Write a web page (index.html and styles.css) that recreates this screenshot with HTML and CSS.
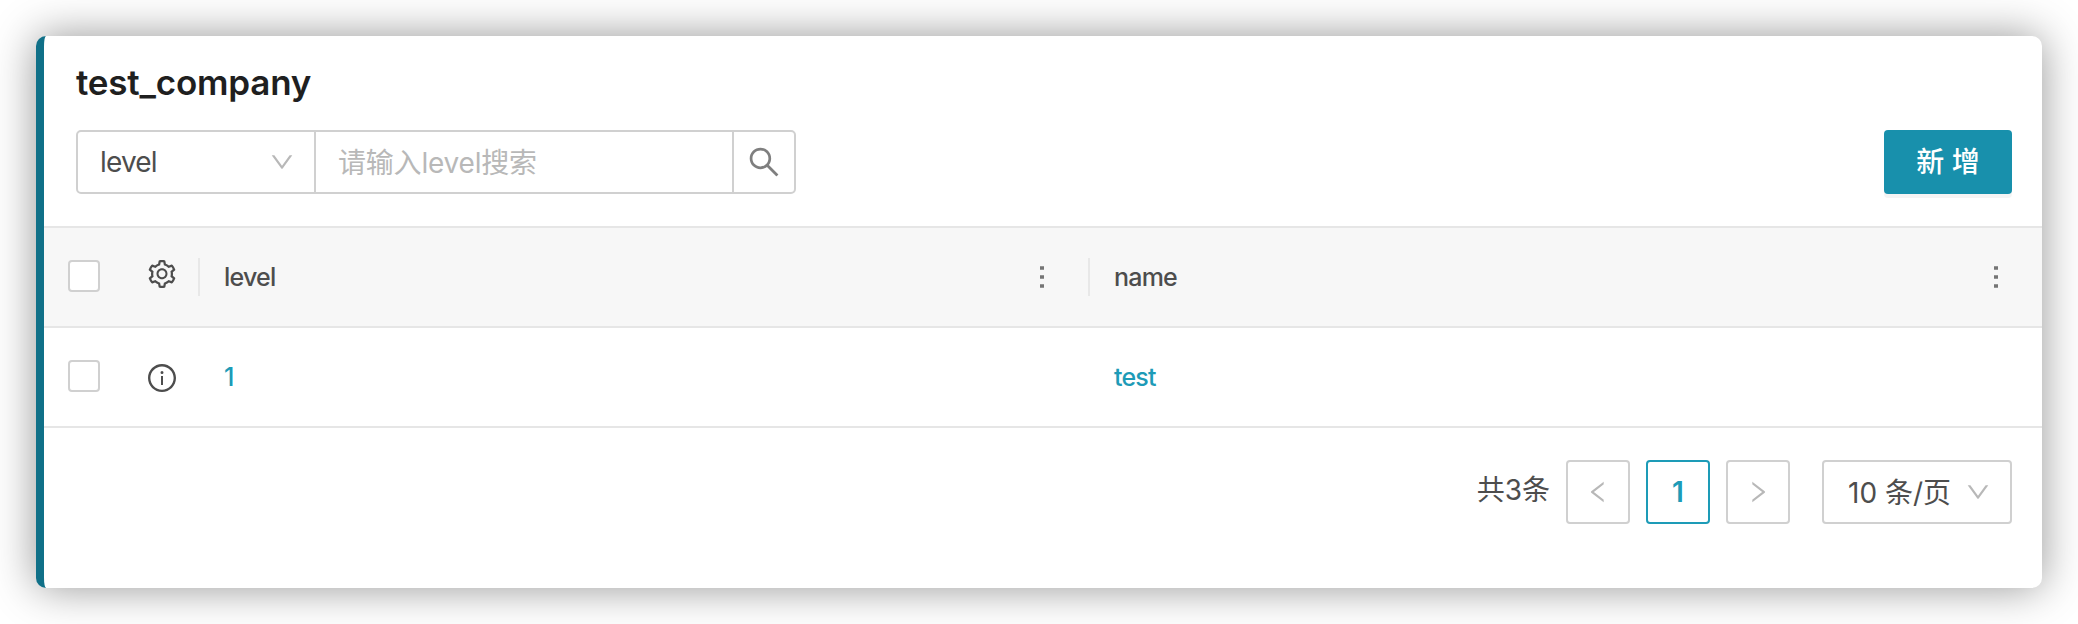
FILE: index.html
```html
<!DOCTYPE html>
<html lang="zh-CN">
<head>
<meta charset="utf-8">
<title>test_company</title>
<link rel="stylesheet" href="styles.css">
</head>
<body>
<svg class="sprite" aria-hidden="true">
  <symbol id="down" viewBox="64 64 896 896"><path d="M884 256h-75c-5.1 0-9.9 2.5-12.9 6.6L512 654.2 227.9 262.6c-3-4.1-7.8-6.6-12.9-6.6h-75c-6.5 0-10.3 7.4-6.5 12.7l352.6 486.1c12.8 17.6 39 17.6 51.7 0l352.6-486.1c3.9-5.3.1-12.7-6.4-12.7z"/></symbol>
  <symbol id="left" viewBox="64 64 896 896"><path d="M724 218.3V141c0-6.7-7.7-10.4-12.9-6.3L260.3 486.8a31.86 31.86 0 000 50.3l450.8 352.1c5.3 4.1 12.9.4 12.9-6.3v-77.3c0-4.9-2.3-9.6-6.1-12.6l-360-281 360-281.1c3.8-3 6.1-7.7 6.1-12.6z"/></symbol>
  <symbol id="search" viewBox="64 64 896 896"><path d="M909.6 854.5L649.9 594.8C690.2 542.7 712 479 712 412c0-80.2-31.3-155.4-87.9-212.1-56.6-56.7-132-87.9-212.1-87.9s-155.5 31.3-212.1 87.9C143.2 256.5 112 331.8 112 412c0 80.1 31.3 155.5 87.9 212.1C256.5 680.8 331.8 712 412 712c67 0 130.6-21.8 182.7-62l259.7 259.6a8.2 8.2 0 0011.6 0l43.6-43.5a8.2 8.2 0 000-11.6zM570.4 570.4C528 612.7 471.8 636 412 636s-116-23.3-158.4-65.6C211.3 528 188 471.8 188 412s23.3-116.1 65.6-158.4C296 211.3 352.2 188 412 188s116.1 23.2 158.4 65.6S636 352.2 636 412s-23.3 116.1-65.6 158.4z"/></symbol>
  <symbol id="info" viewBox="64 64 896 896"><path d="M512 64C264.6 64 64 264.6 64 512s200.6 448 448 448 448-200.6 448-448S759.4 64 512 64zm0 820c-205.4 0-372-166.6-372-372s166.6-372 372-372 372 166.6 372 372-166.6 372-372 372z"/><path d="M464 336a48 48 0 1096 0 48 48 0 10-96 0zm72 112h-48c-4.400 0-8 3.600-8 8v272c0 4.400 3.600 8 8 8h48c4.400 0 8-3.600 8-8V456c0-4.400-3.600-8-8-8z"/></symbol>
  <symbol id="setting" viewBox="64 64 896 896"><path d="M924.8 625.7l-65.5-56c3.1-19 4.7-38.4 4.7-57.8s-1.6-38.8-4.700-57.8l65.5-56a32.030 32.030 0 009.3-35.2l-.9-2.6a443.740 443.740 0 00-79.7-137.9l-1.800-2.100a32.120 32.120 0 00-35.100-9.500l-81.300 28.900c-30-24.600-63.500-44-99.700-57.600l-15.700-85a32.050 32.050 0 00-25.800-25.700l-2.700-.5c-52.100-9.400-106.900-9.400-159 0l-2.700.5a32.050 32.050 0 00-25.800 25.700l-15.800 85.400a351.860 351.860 0 00-99 57.400l-81.900-29.100a32 32 0 00-35.100 9.500l-1.800 2.100a446.020 446.020 0 00-79.700 137.900l-.9 2.600c-4.500 12.500-.8 26.500 9.300 35.200l66.300 56.600c-3.100 18.800-4.600 38-4.600 57.100 0 19.200 1.500 38.400 4.600 57.100L99 625.500a32.030 32.030 0 00-9.300 35.200l.9 2.600c18.100 50.400 44.900 96.900 79.700 137.900l1.800 2.100a32.120 32.120 0 0035.100 9.500l81.900-29.100c29.800 24.500 63.100 43.900 99 57.400l15.800 85.400a32.050 32.050 0 0025.800 25.700l2.700.5a449.400 449.400 0 00159 0l2.700-.5a32.050 32.050 0 0025.800-25.700l15.700-85a350 350 0 0099.700-57.600l81.300 28.900a32 32 0 0035.100-9.500l1.800-2.100c34.800-41.100 61.600-87.500 79.700-137.900l.9-2.600c4.500-12.300.8-26.300-9.300-35zM788.300 465.900c2.500 15.100 3.800 30.600 3.800 46.100s-1.300 31-3.800 46.100l-6.600 40.100 74.700 63.900a370.030 370.030 0 01-42.600 73.600L721 702.800l-31.400 25.800c-23.900 19.600-50.500 35-79.300 45.800l-38.100 14.300-17.900 97a377.500 377.500 0 01-85 0l-17.900-97.200-37.800-14.500c-28.500-10.800-55-26.200-78.700-45.700l-31.400-25.900-93.400 33.200c-17-22.900-31.200-47.600-42.600-73.600l75.500-64.500-6.500-40c-2.400-14.900-3.700-30.300-3.700-45.500 0-15.300 1.200-30.600 3.700-45.500l6.500-40-75.500-64.500c11.300-26.100 25.600-50.700 42.600-73.600l93.400 33.200 31.400-25.900c23.700-19.500 50.200-34.900 78.700-45.700l37.900-14.300 17.900-97.200c28.100-3.200 56.800-3.200 85 0l17.900 97 38.100 14.300c28.700 10.800 55.400 26.200 79.300 45.800l31.400 25.800 92.800-32.900c17 22.900 31.200 47.600 42.600 73.600L781.800 426l6.500 39.900zM512 326c-97.200 0-176 78.800-176 176s78.800 176 176 176 176-78.800 176-176-78.800-176-176-176zm79.200 255.200A111.600 111.600 0 01512 614c-29.900 0-58-11.700-79.200-32.800A111.600 111.600 0 01400 502c0-29.900 11.700-58 32.800-79.200C454 401.600 482.100 390 512 390c29.900 0 58 11.600 79.200 32.800A111.600 111.600 0 01624 502c0 29.900-11.700 58-32.800 79.200z"/></symbol>
  <symbol id="more" viewBox="0 0 4 22"><path d="M0 .3h4v3.400H0zM0 9.300h4v3.400H0zM0 18.300h4v3.400H0z"/></symbol>
</svg>
<main class="card">
  <h1 class="title">test_company</h1>
  <div class="toolbar">
    <div class="search">
      <div class="field"><span class="field-text">level</span><svg class="arrow"><use href="#down"/></svg></div>
      <div class="input"><span class="placeholder">请输入level搜索</span></div>
      <div class="search-btn"><svg class="search-icon"><use href="#search"/></svg></div>
    </div>
    <button class="add">新 增</button>
  </div>
  <div class="row head">
    <div class="check"><span class="box"></span></div>
    <div class="tool"><svg class="icon gear"><use href="#setting"/></svg></div>
    <div class="cell"><span>level</span><svg class="more"><use href="#more"/></svg></div>
    <div class="cell last"><span>name</span><svg class="more"><use href="#more"/></svg></div>
  </div>
  <div class="row">
    <div class="check"><span class="box"></span></div>
    <div class="tool"><svg class="icon info"><use href="#info"/></svg></div>
    <div class="cell link"><span class="one">1</span></div>
    <div class="cell last link"><span>test</span></div>
  </div>
  <div class="pager">
    <span class="total">共3条</span>
    <div class="page"><svg class="arrow"><use href="#left"/></svg></div>
    <div class="page active"><span>1</span></div>
    <div class="page"><svg class="arrow flip"><use href="#left"/></svg></div>
    <div class="size"><span class="size-text">10 条/页</span><svg class="arrow"><use href="#down"/></svg></div>
  </div>
</main>
</body>
</html>
```
FILE: styles.css
```css
* { box-sizing: border-box; }
body {
  margin: 0;
  height: 624px;
  padding: 36px;
  overflow: hidden;
  background: #fff;
  color: #4d4d4d;
  font-family: Inter, "Noto Sans CJK SC", sans-serif;
  font-size: 28px;
}
.sprite { position: absolute; width: 0; height: 0; }
svg { display: block; flex: none; fill: currentColor; }
.card {
  width: 2006px;
  height: 552px;
  border-left: 8px solid #107088;
  border-radius: 10px;
  background: #fff;
  box-shadow: 0 0 44px rgba(0, 0, 0, .42);
}
.title {
  margin: 0;
  height: 94px;
  padding: 22px 0 0 32px;
  color: #1f1f1f;
  font-size: 35px;
  line-height: 48px;
  font-weight: 600;
  letter-spacing: -.2px;
}
.toolbar {
  display: flex;
  justify-content: space-between;
  height: 96px;
  padding: 0 30px 0 32px;
}
.search {
  display: flex;
  width: 720px;
  height: 64px;
  border: 2px solid #d0d0d0;
  border-radius: 5px;
}
.field {
  display: flex;
  align-items: center;
  justify-content: space-between;
  width: 238px;
  padding: 0 20px 0 22px;
  border-right: 2px solid #d0d0d0;
}
.field-text { letter-spacing: -.8px; }
.arrow { width: 24px; height: 24px; color: #b8b8b8; }
.input { display: flex; align-items: center; flex: 1; padding: 0 0 2px 22px; color: #b8b8b8; }
.placeholder { letter-spacing: -.2px; white-space: nowrap; }
.search-btn {
  display: flex;
  align-items: center;
  justify-content: center;
  width: 62px;
  border-left: 2px solid #d0d0d0;
}
.search-icon { width: 32px; height: 32px; color: #7f7f7f; }
.add {
  width: 128px;
  height: 64px;
  padding: 0;
  border: 0;
  border-radius: 4px;
  background: #1890ac;
  box-shadow: 0 4px 0 rgba(0, 0, 0, .045);
  color: #fff;
  font: 500 28px/64px Inter, "Noto Sans CJK SC", sans-serif;
}
.row {
  display: grid;
  grid-template-columns: 88px 66px 890px 1fr;
  align-items: center;
  height: 100px;
  border-bottom: 2px solid #e6e6e6;
  font-size: 25px;
  font-weight: 500;
}
.head { height: 102px; border-top: 2px solid #e6e6e6; background: #f7f7f7; }
.check { padding: 0 0 2px 24px; }
.box {
  display: block;
  width: 32px;
  height: 32px;
  border: 2px solid #d0d0d0;
  border-radius: 4px;
  background: #fff;
}
.tool { padding-left: 16px; }
.icon { width: 28px; height: 28px; overflow: visible; }
.gear { margin-bottom: 6px; }
.info { margin-top: 2px; }
.cell {
  display: flex;
  align-items: center;
  justify-content: space-between;
  height: 38px;
  padding: 0 46px 0 24px;
  letter-spacing: -.8px;
}
.head .cell { border-left: 2px solid #e8e8e8; }
.head .last { padding-right: 44px; }
.row:not(.head) .cell { padding-left: 26px; }
.more { width: 4px; height: 22px; color: #757575; }
.head .cell:not(.last) { padding-right: 44px; }
.link { color: #1d9bb7; }
.pager {
  display: flex;
  justify-content: flex-end;
  gap: 16px;
  padding: 32px 30px 0 0;
}
.total { line-height: 60px; }
.page {
  display: flex;
  align-items: center;
  justify-content: center;
  width: 64px;
  height: 64px;
  border: 2px solid #d0d0d0;
  border-radius: 4px;
}
.active { border-color: #1d9bb7; color: #1d9bb7; font-weight: 600; }
.flip { transform: scaleX(-1); }
.size {
  display: flex;
  align-items: center;
  justify-content: space-between;
  width: 190px;
  height: 64px;
  margin-left: 16px;
  padding: 0 20px 0 24px;
  border: 2px solid #d0d0d0;
  border-radius: 4px;
}
.size-text { padding-bottom: 2px; white-space: nowrap; }
```
